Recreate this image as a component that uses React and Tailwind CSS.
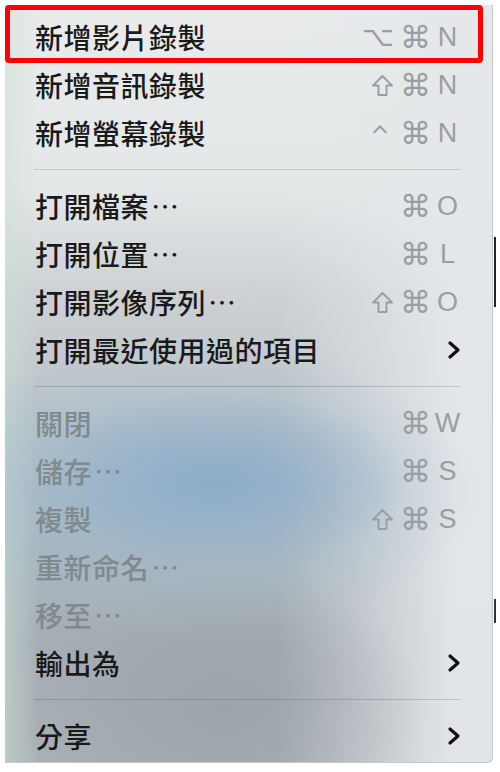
const SECTIONS = [
  [
    { label: "新增影片錄製", mods: ["opt", "cmd"], key: "N" },
    { label: "新增音訊錄製", mods: ["shift", "cmd"], key: "N" },
    { label: "新增螢幕錄製", mods: ["ctrl", "cmd"], key: "N" },
  ],
  [
    { label: "打開檔案", dots: true, mods: ["cmd"], key: "O" },
    { label: "打開位置", dots: true, mods: ["cmd"], key: "L" },
    { label: "打開影像序列", dots: true, mods: ["shift", "cmd"], key: "O" },
    { label: "打開最近使用過的項目", submenu: true },
  ],
  [
    { label: "關閉", mods: ["cmd"], key: "W", disabled: true },
    { label: "儲存", dots: true, mods: ["cmd"], key: "S", disabled: true },
    { label: "複製", mods: ["shift", "cmd"], key: "S", disabled: true },
    { label: "重新命名", dots: true, disabled: true },
    { label: "移至", dots: true, disabled: true },
    { label: "輸出為", submenu: true },
  ],
  [{ label: "分享", submenu: true }],
];

// modifier key glyphs, drawn like the macOS menu symbols
const Mod = ({ type }) => {
  if (type === "shift")
    return (
      <svg width="23" height="23" viewBox="0 0 23 23" className="shrink-0">
        <path
          d="M11.5 2 L21 11.5 H15.5 V21 H7.5 V11.5 H2 Z"
          fill="none"
          stroke="currentColor"
          strokeWidth="1.9"
          strokeLinejoin="round"
        />
      </svg>
    );
  if (type === "ctrl")
    return (
      <svg width="16" height="23" viewBox="0 0 16 23" className="shrink-0 mr-[6px]">
        <polyline
          points="1.5,11 8,4.5 14.5,11"
          fill="none"
          stroke="currentColor"
          strokeWidth="2"
        />
      </svg>
    );
  return (
    <span
      className={
        "font-['DejaVu_Sans',sans-serif] leading-none " +
        (type === "opt" ? "text-[28px]" : "text-[31px]")
      }
    >
      {type === "opt" ? "⌥" : "⌘"}
    </span>
  );
};

const Chevron = () => (
  <svg width="14" height="20" viewBox="0 0 14 20">
    <polyline
      points="3,3 11,10 3,17"
      fill="none"
      stroke="#111"
      strokeWidth="3.2"
      strokeLinecap="round"
      strokeLinejoin="round"
    />
  </svg>
);

const MenuRow = ({ item }) => (
  <div className="h-[48px] flex items-center pl-[30px] pr-[31px]">
    <span
      className={
        "flex-1 text-[28px] leading-none tracking-[0.5px] font-medium " +
        (item.disabled ? "text-[#7f898e]" : "text-[#1a1a1a]")
      }
    >
      {item.label}
      {item.dots && <span className="ml-[2px] font-normal">⋯</span>}
    </span>
    {item.mods && (
      <span className="flex items-center gap-[6px] mr-[3px] text-[#9a9ea1]">
        {item.mods.map((m) => (
          <Mod key={m} type={m} />
        ))}
      </span>
    )}
    {item.key && (
      <span className="w-[27px] text-center font-['Liberation_Sans',sans-serif] text-[27px] leading-none text-[#9a9ea1]">
        {item.key}
      </span>
    )}
    {item.submenu && (
      <span className="w-[27px] flex justify-end">
        <Chevron />
      </span>
    )}
  </div>
);

export default function App() {
  return (
    <div
      lang="zh-TW"
      className="w-[500px] h-[772px] bg-white pl-[5px] pt-[5px] flex items-start font-['Noto_Sans_CJK_TC','Noto_Sans',sans-serif]"
    >
      <div className="relative w-[488px] h-[758px] shrink-0 rounded-br-[6px] border-r border-b border-[#c6c9cb] pt-[8px] bg-[radial-gradient(ellipse_40%_12%_at_43%_63%,rgba(140,172,200,0.95),transparent),radial-gradient(ellipse_62%_19%_at_36%_64%,rgba(158,186,206,0.8),transparent),radial-gradient(ellipse_42%_18%_at_45%_93%,rgba(150,158,165,0.6),transparent),linear-gradient(to_right,rgba(205,224,212,0.55),transparent_7%),linear-gradient(to_right,transparent_56%,rgba(229,232,234,0.95)_92%),linear-gradient(to_bottom,#e9ebeb_0%,#e5e8e8_24%,#cdd1d4_38%,#c0c7cc_50%,#aeb9c1_66%,#a5aeb4_84%,#a9b0b5_100%)]">
        {SECTIONS.map((section, i) => (
          <div key={i}>
            {i > 0 && (
              <div className="h-[25px] flex items-center pl-[29px] pr-[31px]">
                <div className="h-px w-full bg-black/15" />
              </div>
            )}
            {section.map((item) => (
              <MenuRow key={item.label} item={item} />
            ))}
          </div>
        ))}

        {/* red highlight on the first item */}
        <div className="absolute left-0 top-0 w-[478px] h-[58px] border-[5px] border-[#ff0000] rounded-[4px]" />
      </div>

      {/* sliver of the window behind the menu */}
      <div className="w-[7px] h-[758px] flex flex-col pl-[1px]">
        <div className="h-[232px]" />
        <div className="w-[2px] h-[70px] bg-[#222]" />
        <div className="h-[292px]" />
        <div className="w-[2px] h-[24px] bg-[#333]" />
      </div>
    </div>
  );
}
